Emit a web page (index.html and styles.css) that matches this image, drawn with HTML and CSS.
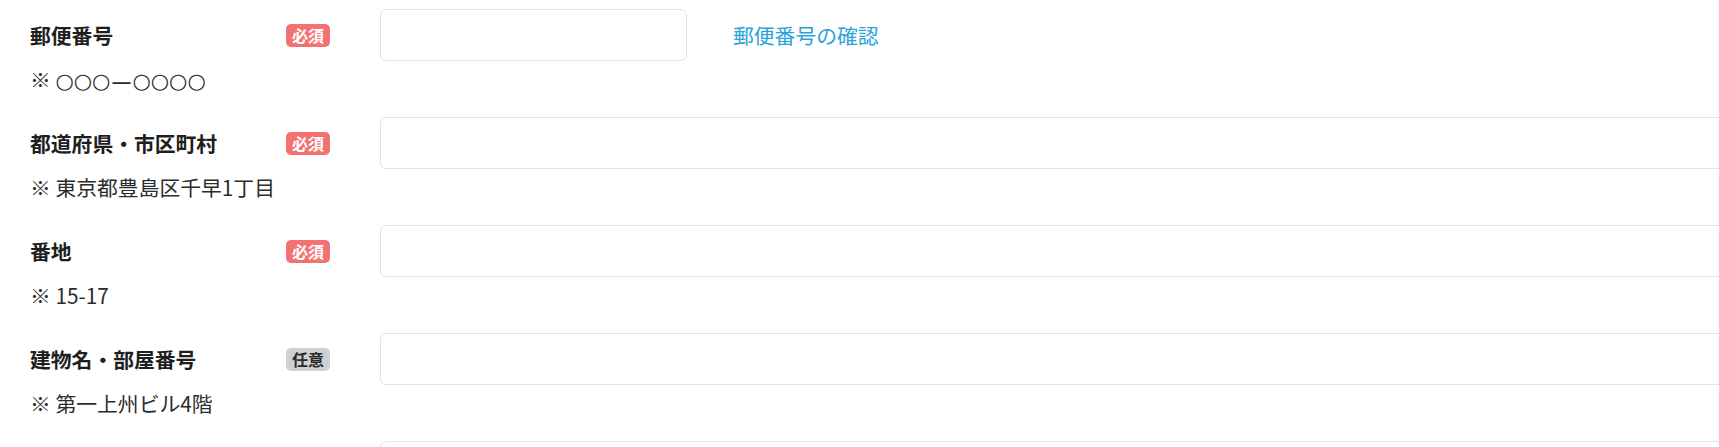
FILE: index.html
```html
<!DOCTYPE html>
<html lang="ja">
<head>
<meta charset="utf-8">
<title>住所入力</title>
<link rel="stylesheet" href="styles.css">
</head>
<body>
<div class="form">
  <div class="row">
    <div class="label-col">
      <div class="label-line"><span class="label">郵便番号</span><span class="badge req">必須</span></div>
      <div class="hint">※ <span class="sym">○○○</span><span class="dash">—</span><span class="sym">○○○○</span></div>
    </div>
    <div class="field">
      <input class="input short" type="text">
      <a class="link" href="#">郵便番号の確認</a>
    </div>
  </div>
  <div class="row">
    <div class="label-col">
      <div class="label-line"><span class="label">都道府県・市区町村</span><span class="badge req">必須</span></div>
      <div class="hint">※ 東京都豊島区千早1丁目</div>
    </div>
    <div class="field"><input class="input wide" type="text"></div>
  </div>
  <div class="row">
    <div class="label-col">
      <div class="label-line"><span class="label">番地</span><span class="badge req">必須</span></div>
      <div class="hint">※ 15-17</div>
    </div>
    <div class="field"><input class="input wide" type="text"></div>
  </div>
  <div class="row">
    <div class="label-col">
      <div class="label-line"><span class="label">建物名・部屋番号</span><span class="badge opt">任意</span></div>
      <div class="hint">※ 第一上州ビル4階</div>
    </div>
    <div class="field"><input class="input wide" type="text"></div>
  </div>
  <div class="row">
    <div class="label-col"></div>
    <div class="field"><input class="input wide" type="text"></div>
  </div>
</div>
</body>
</html>
```
FILE: styles.css
```css
html, body {
  margin: 0;
  padding: 0;
  background: #ffffff;
  overflow: hidden;
}
body {
  font-family: "Noto Sans CJK JP", "Noto Sans", sans-serif;
  color: #222222;
  font-size: 20.8px;
}
.form {
  padding-left: 30px;
  width: 2000px;
}
.row {
  display: flex;
  padding: 9px 0 13px;
}
.label-col {
  width: 300px;
  flex: none;
  padding-top: 11px;
  margin-right: 50px;
}
.label-line {
  display: flex;
  align-items: center;
  justify-content: space-between;
  height: 31px;
}
.label {
  font-weight: 700;
  line-height: 31px;
  color: #1e1e1e;
}
.badge {
  display: inline-block;
  font-size: 16px;
  font-weight: 700;
  line-height: 23px;
  height: 23px;
  padding: 0 6px;
  border-radius: 5px;
}
.badge.req {
  background: #f47171;
  color: #ffffff;
}
.badge.opt {
  background: #cdd1d6;
  color: #2a2a2a;
}
.hint {
  margin-top: 13px;
  height: 31px;
  line-height: 31px;
  color: #2c2c2c;
  white-space: nowrap;
}
.sym {
  font-family: "DejaVu Sans", sans-serif;
  font-size: 21px;
  line-height: 1;
}
.dash {
  font-family: "Liberation Sans", sans-serif;
  font-weight: 700;
  font-size: 18px;
  line-height: 1;
  margin: 0 2px;
}
.field {
  display: flex;
  align-items: center;
  height: 52px;
}
.input {
  box-sizing: border-box;
  height: 52px;
  border: 1px solid #e2e2e2;
  border-radius: 6px;
  background: #fff;
  outline: none;
  padding: 0 12px;
  font: inherit;
}
.input.short {
  width: 307px;
}
.input.wide {
  width: 1400px;
}
.link {
  margin-left: 46px;
  color: #2aa3d9;
  text-decoration: none;
  line-height: 31px;
}
```
